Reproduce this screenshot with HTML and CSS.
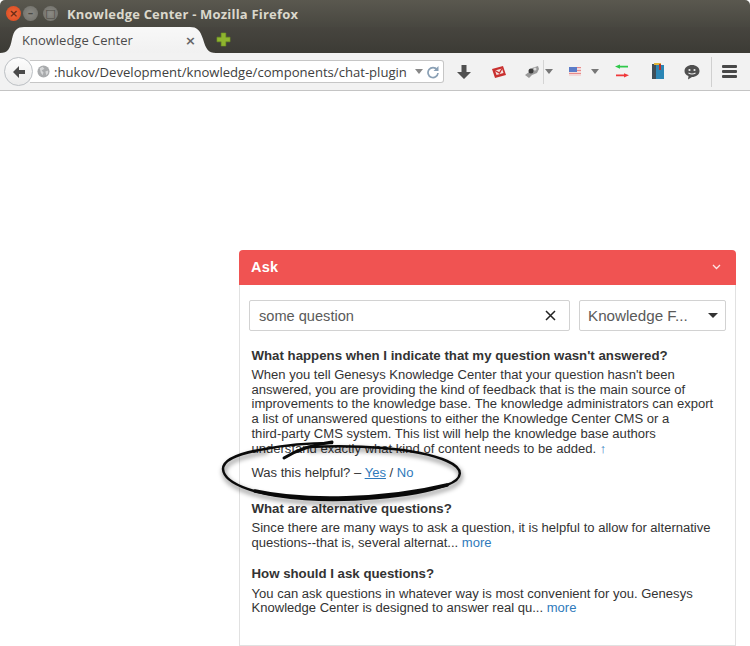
FILE: index.html
```html
<!DOCTYPE html>
<html lang="en">
<head>
<meta charset="utf-8">
<title>Knowledge Center - Mozilla Firefox</title>
<link rel="stylesheet" href="styles.css">
</head>
<body>
<div class="browser">
  <header class="titlebar">
    <div class="win-buttons">
      <span class="win-btn close">×</span>
      <span class="win-btn min">–</span>
      <span class="win-btn max">□</span>
    </div>
    <span class="win-title">Knowledge Center - Mozilla Firefox</span>
  </header>
  <div class="tabstrip">
    <div class="tab">
      <span class="tab-label">Knowledge Center</span>
      <span class="tab-close">×</span>
    </div>
    <svg class="new-tab" width="15" height="15" viewBox="0 0 16 16"><path d="M5.500 1h5v4.500H15v5h-4.500V15h-5v-4.500H1v-5h4.500z" fill="#8fb52f" stroke="#6f9220" stroke-width=".6"/></svg>
  </div>
  <div class="toolbar">
    <div class="back-btn">
      <svg width="16" height="16" viewBox="0 0 16 16"><path d="M8 2 2 8l6 6V10h6V6H8z" fill="#4a4a4a"/></svg>
    </div>
    <div class="urlbar">
      <svg class="globe" width="13" height="13" viewBox="0 0 14 14"><circle cx="7" cy="7" r="6.500" fill="#a9abad"/><path d="M3 3.500 6 2l2 2-3 2 2 2-1 3-2-3zM9 7l3-1 0 3-2 2z" fill="#d6d7d8"/></svg>
      <span class="url-text">:hukov/Development/knowledge/components/chat-plugin</span>
      <span class="url-drop"></span>
      <svg class="reload" width="14" height="14" viewBox="0 0 14 14"><path d="M11 4.500A5 5 0 1 0 12 8" fill="none" stroke="#8aa0b5" stroke-width="1.700"/><path d="M12.500 1v5h-5z" fill="#8aa0b5"/></svg>
    </div>
    <div class="tools">
      <svg class="t-down" width="16" height="16" viewBox="0 0 16 16"><path d="M5.500 1h5v7H15l-7 7-7-7h4.500z" fill="#505050"/></svg>
      <svg class="t-mail" width="16" height="14" viewBox="0 0 16 14"><path d="M1 4 12 1l3 9-11 3z" fill="#c9302f"/><path d="M4 5.500 11 3.500l1.500 4.500-7 2z" fill="#f3e3e0"/><path d="M4 5.500 8.500 8 11 3.500" fill="none" stroke="#c9302f" stroke-width="1.300"/></svg>
      <svg class="t-bug" width="16" height="14" viewBox="0 0 16 14"><path d="M1 10 5 7l3-4 6-2 1 3-2 4-5 2-3 3z" fill="#9a9a9a"/><circle cx="7" cy="6" r="2.500" fill="#3c3c3c"/><circle cx="11" cy="4" r="1.500" fill="#dcdcdc"/></svg>
      <span class="tool-sep"></span>
      <span class="caret c-bug"></span>
      <span class="flag"><span class="flag-blue"></span></span>
      <span class="caret c-flag"></span>
      <svg class="t-arrows" width="14" height="16" viewBox="0 0 14 16"><path d="M5 0v2h8v3H5v2L0 3.500z" fill="#2fc84a" transform="translate(0 .5) scale(1 .6)"/><path d="M9 9v2H1v3h8v2l5-3.500z" fill="#f0383a" transform="translate(0 3.800) scale(1 .6)"/></svg>
      <svg class="t-book" width="14" height="17" viewBox="0 0 14 17"><path d="M1 1h5v15H1z" fill="#3f4e58"/><path d="M5 2h8v14H5z" fill="#2b86b5"/><path d="M3 0h7v2H3z" fill="#e0b53a"/><path d="M8 1h2v6H8z" fill="#b8322c"/></svg>
      <svg class="t-chat" width="16" height="16" viewBox="0 0 16 16"><path d="M8 1c4 0 7.500 2.500 7.500 6S12 13 8 13l-4 2.500.5-3.500C2 11 .5 9.500.5 7 .5 3.500 4 1 8 1z" fill="#505050"/><circle cx="5.500" cy="6" r="1.100" fill="#eee"/><circle cx="10.500" cy="6" r="1.100" fill="#eee"/><path d="M4.500 9q3.500 2 7 0" fill="none" stroke="#eee" stroke-width="1.100"/></svg>
      <span class="tool-sep tall"></span>
      <span class="menu-btn"><i></i><i></i><i></i></span>
    </div>
  </div>
  <main class="page">
    <section class="widget">
      <div class="widget-head">
        <span class="widget-title">Ask</span>
        <svg class="chevron" width="9" height="6" viewBox="0 0 9 6"><path d="M1 1l3.500 3.500L8 1" fill="none" stroke="#fff" stroke-opacity=".85" stroke-width="1.300"/></svg>
      </div>
      <div class="widget-body">
        <div class="search-row">
          <div class="field question">
            <span class="field-text">some question</span>
            <svg width="11" height="11" viewBox="0 0 11 11"><path d="M1 1l9 9M10 1l-9 9" stroke="#222" stroke-width="1.500"/></svg>
          </div>
          <div class="field kb-select">
            <span class="field-text kb-text">Knowledge F...</span>
            <span class="select-caret"></span>
          </div>
        </div>
        <article class="qa first">
          <h3>What happens when I indicate that my question wasn't answered?</h3>
          <p>When you tell Genesys Knowledge Center that your question hasn't been<br>answered, you are providing the kind of feedback that is the main source of<br>improvements to the knowledge base. The knowledge administrators can export<br>a list of unanswered questions to either the Knowledge Center CMS or a<br>third-party CMS system. This list will help the knowledge base authors<br>understand exactly what kind of content needs to be added. <a href="#">↑</a></p>
          <p class="helpful">Was this helpful? – <a class="yes" href="#">Yes</a> / <a href="#">No</a></p>
        </article>
        <article class="qa">
          <h3>What are alternative questions?</h3>
          <p>Since there are many ways to ask a question, it is helpful to allow for alternative<br>questions--that is, several alternat... <a href="#">more</a></p>
        </article>
        <article class="qa last">
          <h3>How should I ask questions?</h3>
          <p>You can ask questions in whatever way is most convenient for you. Genesys<br>Knowledge Center is designed to answer real qu... <a href="#">more</a></p>
        </article>
      </div>
    </section>
    <svg class="ellipse" width="260" height="90" viewBox="0 0 260 90">
      <path class="ellipse-shadow" d="M93 22C140 20 200 22 232 36 250 44 248 54 232 60 195 73 130 77 90 74 45 71 9 60 8 44 8 34 25 28 50 24"/>
      <path class="ellipse-ink" d="M93 22C140 20 200 22 232 36 250 44 248 54 232 60 195 73 130 77 90 74 45 71 9 60 8 44 8 34 25 28 50 24 70 20 95 18 117 18"/>
      <path class="ellipse-ink thick" d="M40 66C90 77 170 75 232 60"/>
      <path class="ellipse-ink mid" d="M69 33C80 26 95 20 117 17"/>
    </svg>
  </main>
</div>
</body>
</html>
```
FILE: styles.css
```css
* { box-sizing: border-box; }
html, body { margin: 0; padding: 0; background: #fff; }
body { width: 750px; height: 646px; overflow: hidden; font-family: "Liberation Sans", Arial, sans-serif; }
.browser { display: flex; flex-direction: column; height: 646px; }

.titlebar { height: 27px; display: flex; align-items: center; padding-left: 6px; background: linear-gradient(#5a584f, #484740); flex: none; border-radius: 5px 5px 0 0; }
.win-buttons { display: flex; gap: 2px; width: 61px; }
.win-btn { width: 15px; height: 15px; border-radius: 50%; display: flex; align-items: center; justify-content: center; font: bold 11px/1 "DejaVu Sans", sans-serif; color: #4c4a44; background: radial-gradient(#8b8a84, #6f6e68); }
.win-btn.close { background: radial-gradient(#f0683a, #d8491f); color: #6e2c14; }
.win-btn.max { margin-left: 3px; }
.win-title { font: bold 13px "Open Sans", "Noto Sans", sans-serif; color: #dbd8cc; letter-spacing: .2px; }

.tabstrip { height: 26px; background: linear-gradient(#47453f, #3c3b35); display: flex; align-items: flex-end; flex: none; }
.tab { width: 216px; height: 26px; background: linear-gradient(#f8f8f8, #f1f1f1); clip-path: path('M0 26C8 26 10 22 12 12 14 3 17 0 24 0L190 0C197 0 200 3 203 12 206 22 208 26 216 26Z'); display: flex; align-items: center; justify-content: space-between; padding: 0 20px 0 22px; }
.tab-label { font: 13px "Open Sans", "Noto Sans", sans-serif; color: #4c4c4c; }
.tab-close { font: bold 13px/1 "DejaVu Sans", sans-serif; color: #666; }
.new-tab { margin: 0 0 6px 0; }

.toolbar { height: 38px; background: #f2f2f2; border-bottom: 1px solid #c4c4c4; display: flex; align-items: center; padding-left: 4px; flex: none; }
.back-btn { width: 29px; height: 29px; border-radius: 50%; background: linear-gradient(#fdfdfd, #ebebeb); border: 1px solid #bcc0c4; display: flex; align-items: center; justify-content: center; flex: none; position: relative; z-index: 1; }
.urlbar { width: 414px; height: 23px; margin-left: -3px; background: #fff; border: 1px solid #c6c6c6; border-left: none; border-radius: 0 3px 3px 0; display: flex; align-items: center; padding-left: 7px; flex: none; }
.globe { flex: none; }
.url-text { font: 13.100px "Open Sans", "Noto Sans", sans-serif; color: #404040; margin-left: 4px; white-space: nowrap; width: 359px; flex: none; }
.url-drop { width: 0; height: 0; border: 4px solid transparent; border-top: 5px solid #888; border-bottom: 0; margin-left: 2px; flex: none; }
.reload { margin-left: 3px; flex: none; }

.tools { flex: 1; display: flex; align-items: center; height: 100%; }
.tools > * { flex: none; }
.t-down { margin-left: 12px; }
.t-mail { margin-left: 19px; }
.t-bug { margin-left: 17px; }
.tool-sep { width: 1px; height: 24px; margin-left: 3px; background: #d4d4d4; }
.c-bug { margin-left: 1px; }
.caret { width: 0; height: 0; border: 4px solid transparent; border-top: 5px solid #777; border-bottom: 0; }
.flag { margin-left: 16px; width: 12px; height: 9px; background: repeating-linear-gradient(#e88a8a 0 1.500px, #f3d9d9 1.500px 3px); }
.flag-blue { display: block; width: 8px; height: 5px; background: #5b7cc8; }
.c-flag { margin-left: 10px; }
.t-arrows { margin-left: 16px; }
.t-book { margin-left: 22px; }
.t-chat { margin-left: 19px; }
.tool-sep.tall { margin-left: 11px; height: 30px; background: #d0d0d0; }
.menu-btn { margin-left: 10px; width: 15px; display: flex; flex-direction: column; gap: 2px; }
.menu-btn i { display: block; height: 3px; background: #484848; border-radius: 1px; }

.page { flex: 1; padding: 159px 14px 0 239px; position: relative; background: #fff; }
.widget { height: 396px; display: flex; flex-direction: column; }
.widget-head { height: 35px; flex: none; background: #f05352; border-radius: 4px 4px 0 0; display: flex; align-items: center; justify-content: space-between; padding: 0 15px 1px 12px; }
.widget-title { font-size: 14.500px; font-weight: bold; color: #fff; letter-spacing: .2px; }
.widget-body { flex: 1; padding: 15px 9px 0; border: 1px solid #e1e1e1; border-top: 0; }
.search-row { display: flex; gap: 9px; }
.field { height: 31px; border: 1px solid #d2d2d2; border-radius: 2px; display: flex; align-items: center; justify-content: space-between; }
.question { width: 321px; padding: 0 13px 0 9px; }
.kb-select { width: 147px; padding: 0 7px 0 8px; }
.field-text { font-size: 14.600px; color: #5a5a5a; white-space: nowrap; }
.kb-text { font-size: 15.200px; }
.select-caret { width: 0; height: 0; border: 5px solid transparent; border-top: 5px solid #333; border-bottom: 0; }
.qa { margin: 0 0 15px; padding-left: 2.500px; }
.qa.first { margin-top: 17px; margin-bottom: 20px; }
.qa h3 { margin: 0 0 4px; font-size: 13.250px; line-height: 16px; color: #333; }
.qa.last h3 { margin-bottom: 5px; }
.qa p { margin: 0; font-size: 13.050px; line-height: 14.700px; color: #333; white-space: nowrap; }
.qa .helpful { margin-top: 9px; line-height: 16px; }
.qa a { color: #2f7abb; text-decoration: none; }
.qa a.yes { text-decoration: underline; }

.ellipse { position: absolute; left: 215px; top: 334px; overflow: visible; pointer-events: none; }
.ellipse path { fill: none; stroke-linecap: round; }
.ellipse-shadow { stroke: rgba(0,0,0,.3); stroke-width: 5px; filter: blur(2px); transform: translate(1px, 3px); }
.ellipse-ink { stroke: #0a0a0a; stroke-width: 2.500px; }
.ellipse-ink.mid { stroke-width: 3px; }
.ellipse-ink.thick { stroke-width: 3.500px; }
```
